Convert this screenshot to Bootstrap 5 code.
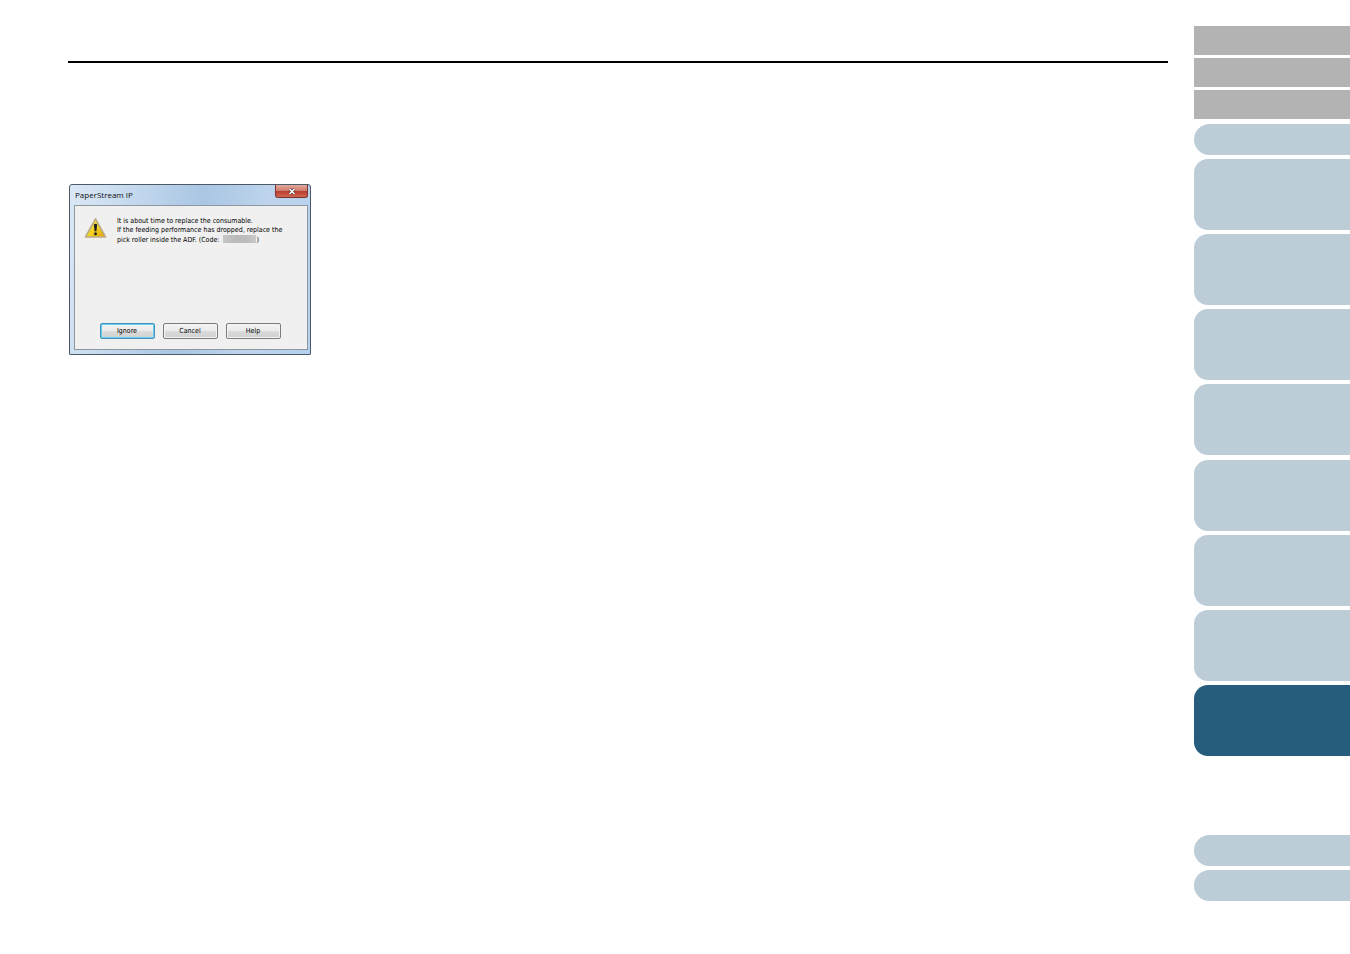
<!DOCTYPE html>
<html lang="en">
<head>
<meta charset="utf-8">
<meta name="viewport" content="width=device-width, initial-scale=1">
<title>PaperStream IP</title>
<link href="https://cdn.jsdelivr.net/npm/bootstrap@5.3.0/dist/css/bootstrap.min.css" rel="stylesheet">
<style>
body{background:#fff;font-family:"Liberation Sans",Arial,sans-serif}
.page-main{padding:61px 26px 40px 68px}
.page-rule{border-top:2px solid #000;opacity:1;margin:0 0 121px}
.dialog-win{width:242px;margin-left:1px;border:1px solid #4c5a68;border-radius:3px 3px 1px 1px;background:linear-gradient(100deg,#dbe8f5 0,#c3d8ee 25%,#a9c6e3 50%,#bed4ec 75%,#b4d0ee 100%);padding:0 2px 4px 4px}
.dialog-title{height:20px}
.dialog-title h1{font:8px/20px "Open Sans",sans-serif;color:#111;padding-left:1px}
.win-close{width:33px;height:13px;border:1px solid #7c3433;border-top:0;border-radius:0 0 3px 3px;background:linear-gradient(#e3a99c 0,#d17b6b 48%,#b93c2c 52%,#cf6650 100%)}
.dialog-pane{border:1px solid #8f989f;background:#f0f0f0;height:145px;padding:11px 11px 10px 9px}
.dialog-text{font:7px/9px "DejaVu Sans Condensed","Open Sans",sans-serif;color:#000;margin-left:2px}
.code-mask{display:inline-block;width:33px;height:8px;margin-left:2px;vertical-align:-1px;background:linear-gradient(90deg,#c6c6c6,#b9b9b9 40%,#bdbdbd 75%,#cacaca)}
.win-btn{width:55px;height:16px;border:1px solid #7c7c7c;border-radius:2px;background:linear-gradient(#f3f3f3 0,#ebebeb 48%,#dcdcdc 52%,#cfcfcf 100%);font:7px/14px "DejaVu Sans Condensed","Open Sans",sans-serif;color:#000;box-shadow:inset 0 0 0 1px #f4f4f4}
.win-btn.is-default{border-color:#4a8fb8;box-shadow:inset 0 0 0 1px #5fd0f3}
.side-nav{width:156px;padding-top:26px}
.side-nav a{display:block}
.tab-flat{background:#b3b3b3;height:29px;margin-bottom:3px}
.tab-flat.last{margin-bottom:5px}
.tab-pill,.tab-block{background:#bdcdd8;border-radius:16px 0 0 16px;height:31px;margin-bottom:4px}
.tab-block{height:71px;border-radius:14px 0 0 14px}
.tab-block.mid{margin-bottom:5px}
.tab-block.current{background:#265d7c;margin-bottom:79px}
</style>
</head>
<body>
<div class="d-flex">
<main class="page-main flex-grow-1">
<hr class="page-rule">
<section class="dialog-win" role="dialog" aria-labelledby="dlg-title">
<header class="dialog-title d-flex justify-content-between align-items-start">
<h1 class="m-0" id="dlg-title">PaperStream IP</h1>
<button type="button" class="win-close p-0 d-flex align-items-center justify-content-center" aria-label="Close">
<svg width="8" height="7" viewBox="0 0 8 7"><path d="M1.5 1 6.5 6M6.5 1 1.5 6" stroke="#5b3838" stroke-width="2.8"/><path d="M1.5 1 6.5 6M6.5 1 1.5 6" stroke="#fff" stroke-width="1.5"/></svg>
</button>
</header>
<div class="dialog-pane d-flex flex-column justify-content-between">
<div class="d-flex gap-2">
<svg class="flex-shrink-0" width="23" height="22" viewBox="0 0 23 22" aria-hidden="true">
<defs><linearGradient id="warn" x1="0" y1="0" x2="1" y2="1"><stop offset="0" stop-color="#fff29a"/><stop offset=".45" stop-color="#f7d92a"/><stop offset="1" stop-color="#dfa000"/></linearGradient></defs>
<path d="M11.5 1.8 21.5 20H1.5Z" fill="url(#warn)" stroke="#b9aa83" stroke-width="1.6" stroke-linejoin="round"/>
<path d="M9.8 7.5q1.7-1.4 3.4 0L12.4 14.2h-1.8Z" fill="#222"/><circle cx="11.5" cy="16.8" r="1.5" fill="#222"/>
</svg>
<p class="dialog-text mb-0 text-nowrap">It is about time to replace the consumable.<br>If the feeding performance has dropped, replace the<br>pick roller inside the ADF. (Code: <span class="code-mask"></span>)</p>
</div>
<div class="d-flex justify-content-center">
<button type="button" class="win-btn is-default p-0">Ignore</button>
<button type="button" class="win-btn p-0 mx-2">Cancel</button>
<button type="button" class="win-btn p-0">Help</button>
</div>
</div>
</section>
</main>
<nav class="side-nav flex-shrink-0" aria-label="Chapters">
<a href="#" class="tab-flat" aria-label="Top"></a>
<a href="#" class="tab-flat" aria-label="Contents"></a>
<a href="#" class="tab-flat last" aria-label="Index"></a>
<a href="#" class="tab-pill" aria-label="Introduction"></a>
<a href="#" class="tab-block" aria-label="Chapter 1"></a>
<a href="#" class="tab-block" aria-label="Chapter 2"></a>
<a href="#" class="tab-block" aria-label="Chapter 3"></a>
<a href="#" class="tab-block mid" aria-label="Chapter 4"></a>
<a href="#" class="tab-block" aria-label="Chapter 5"></a>
<a href="#" class="tab-block" aria-label="Chapter 6"></a>
<a href="#" class="tab-block" aria-label="Chapter 7"></a>
<a href="#" class="tab-block current" aria-label="Chapter 8" aria-current="page"></a>
<a href="#" class="tab-pill" aria-label="Appendix"></a>
<a href="#" class="tab-pill" aria-label="Glossary"></a>
</nav>
</div>
<script src="https://cdn.jsdelivr.net/npm/bootstrap@5.3.0/dist/js/bootstrap.bundle.min.js"></script>
</body>
</html>
